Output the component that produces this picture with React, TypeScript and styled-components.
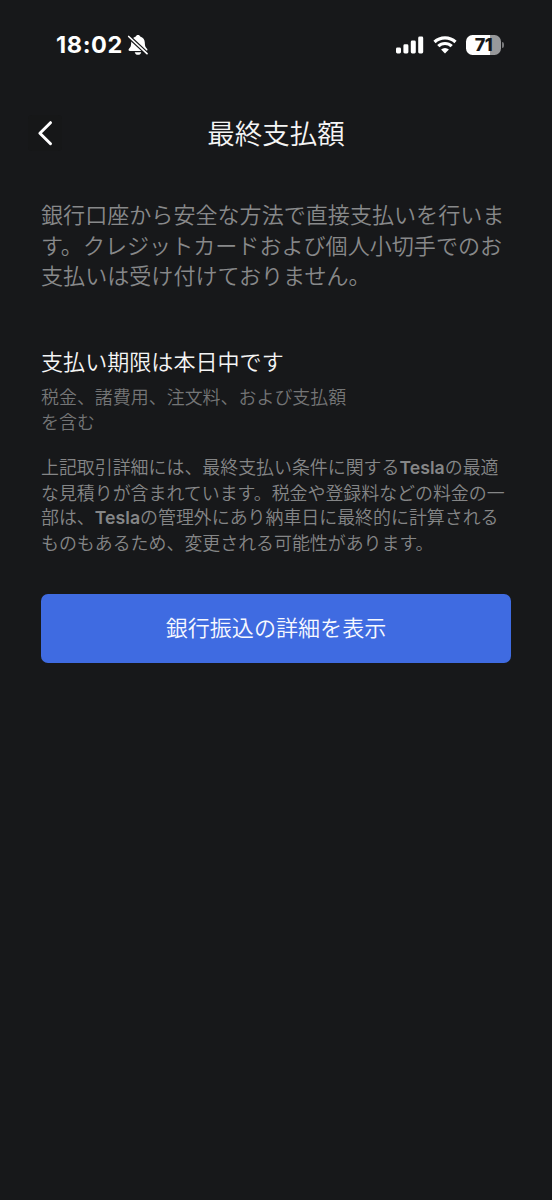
import React from "react";
import styled, { createGlobalStyle } from "styled-components";

const GlobalStyle = createGlobalStyle`
  * { box-sizing: border-box; }
  html, body { margin: 0; background: #17181a; }
  h1, h2, p { margin: 0; font-weight: 350; }
`;

const Screen = styled.main`
  width: 552px;
  height: 1200px;
  overflow: hidden;
  background: #17181a;
  color: #f5f5f5;
  font-family: "Noto Sans CJK JP", sans-serif;
`;

const StatusBar = styled.div`
  display: flex;
  justify-content: space-between;
  height: 90px;
  padding: 33px 48px 0 56px;
`;

const StatusGroup = styled.div<{ $gap: number }>`
  display: flex;
  align-items: center;
  gap: ${(p) => p.$gap}px;
  height: 24px;
`;

const Clock = styled.span`
  width: 67px;
  white-space: nowrap;
  color: #fff;
  font: 700 23.5px/24px Inter, sans-serif;
  letter-spacing: 0.6px;
`;

const Header = styled.header`
  display: grid;
  grid-template-columns: 34px 1fr 34px;
  align-items: center;
  height: 86px;
  padding: 0 28px;
`;

const BackButton = styled.button`
  display: flex;
  align-items: center;
  width: 34px;
  height: 36px;
  padding: 0 0 0 8px;
  border: 0;
  border-radius: 4px;
  background: #161718;
`;

const Title = styled.h1`
  padding-bottom: 2px;
  font-size: 27.5px;
  line-height: 40px;
  text-align: center;
`;

const Content = styled.section`
  padding: 22px 41px 0;
`;

const Line = styled.span<{ $height: number }>`
  display: block;
  height: ${(p) => p.$height}px;
  line-height: ${(p) => p.$height}px;
  white-space: nowrap;
`;

const Intro = styled.p`
  color: #88898a;
  font-size: 22.07px;
`;

const DueHeading = styled.h2`
  margin-top: 48px;
  font-size: 22.07px;
  line-height: 44px;
`;

const DueDetail = styled.p`
  margin-top: 2px;
  color: #747576;
  font-size: 17.97px;
`;

const Note = styled.p`
  margin-top: 19px;
  color: #858687;
  font-size: 17.93px;
`;

const Brand = styled.span`
  font-family: Inter, sans-serif;
  font-weight: 600;
  font-size: 17.7px;
`;

const PrimaryButton = styled.button`
  display: block;
  width: 470px;
  height: 69px;
  margin-top: 38px;
  padding: 0 0 4px;
  border: 0;
  border-radius: 7px;
  background: #3f6be1;
  color: #f7f9ff;
  font: 350 22.07px/65px "Noto Sans CJK JP", sans-serif;
`;

const MutedBell = () => (
  <svg width="22" height="22" viewBox="0 0 22 22">
    <path d="M11 1c-1.200 0-2 .7-2.200 1.600C5.800 3.500 4.300 5.800 4.200 8.500c-.1 4-1 5-2.200 6.200-.9 1-.4 2.300.9 2.300h16.200c1.300 0 1.800-1.300.9-2.300-1.200-1.200-2.100-2.200-2.200-6.200-.1-2.700-1.600-5-4.600-5.900C13 1.700 12.200 1 11 1ZM7.700 18.200c.4 1.600 1.600 2.600 3.300 2.600s2.900-1 3.300-2.600Z" fill="#fff" />
    <path d="M1.700 2.500 20 19.600" stroke="#17181a" strokeWidth="4" />
    <path d="M1.700 2.500 20 19.600" stroke="#fff" strokeWidth="1.700" strokeLinecap="round" />
  </svg>
);

const Signal = () => (
  <svg width="28" height="18" viewBox="0 0 28 18" fill="#fff">
    <rect x="0" y="11.500" width="5" height="6" rx="1.400" />
    <rect x="7.400" y="8.300" width="5" height="9.200" rx="1.400" />
    <rect x="14.800" y="4.500" width="5" height="13" rx="1.400" />
    <rect x="22.200" y="0.500" width="5" height="17" rx="1.400" />
  </svg>
);

const Wifi = () => (
  <svg width="24" height="18" viewBox="0 0 24 18" fill="none" stroke="#fff" strokeWidth="3.200">
    <path d="M1.500 6a15.200 15.200 0 0 1 21 0" />
    <path d="M5.300 10.200a9.600 9.600 0 0 1 13.400 0" />
    <path d="m12 17.500-3.900-3.900a5.500 5.500 0 0 1 7.800 0Z" fill="#fff" stroke="none" />
  </svg>
);

const BatteryRow = styled.div`
  display: flex;
  align-items: center;
  gap: 1px;
`;

const Battery = styled.div`
  width: 35px;
  height: 20px;
  border-radius: 6.500px;
  background: linear-gradient(90deg, #fff 24.5px, #98999b 24.5px);
  color: #17181a;
  font: 800 18px/20px Inter, sans-serif;
  letter-spacing: -0.4px;
  text-align: center;
`;

const BatteryTip = styled.i`
  width: 2px;
  height: 6px;
  border-radius: 0 2px 2px 0;
  background: #77787a;
`;

export default function App() {
  return (
    <>
      <GlobalStyle />
      <Screen>
        <StatusBar>
          <StatusGroup $gap={4}>
            <Clock>18:02</Clock>
            <MutedBell />
          </StatusGroup>
          <StatusGroup $gap={9}>
            <Signal />
            <Wifi />
            <BatteryRow>
              <Battery>71</Battery>
              <BatteryTip />
            </BatteryRow>
          </StatusGroup>
        </StatusBar>
        <Header>
          <BackButton aria-label="戻る">
            <svg width="18" height="28" viewBox="0 0 18 28" fill="none" stroke="#fff" strokeWidth="3" strokeLinecap="round" strokeLinejoin="round">
              <path d="M14.500 3.700 3.900 14.200 14.500 24.700" />
            </svg>
          </BackButton>
          <Title>最終支払額</Title>
        </Header>
        <Content>
          <Intro>
            <Line $height={30.5}>銀行口座から安全な方法で直接支払いを行いま</Line>
            <Line $height={30.5}>す。クレジットカードおよび個人小切手でのお</Line>
            <Line $height={30.5}>支払いは受け付けておりません。</Line>
          </Intro>
          <DueHeading>支払い期限は本日中です</DueHeading>
          <DueDetail>
            <Line $height={25}>税金、諸費用、注文料、および支払額</Line>
            <Line $height={25}>を含む</Line>
          </DueDetail>
          <Note>
            <Line $height={27}>上記取引詳細には、最終支払い条件に関する<Brand>Tesla</Brand>の最適</Line>
            <Line $height={25}>な見積りが含まれています。税金や登録料などの料金の一</Line>
            <Line $height={23}>部は、<Brand>Tesla</Brand>の管理外にあり納車日に最終的に計算される</Line>
            <Line $height={28}>ものもあるため、変更される可能性があります。</Line>
          </Note>
          <PrimaryButton>銀行振込の詳細を表示</PrimaryButton>
        </Content>
      </Screen>
    </>
  );
}
